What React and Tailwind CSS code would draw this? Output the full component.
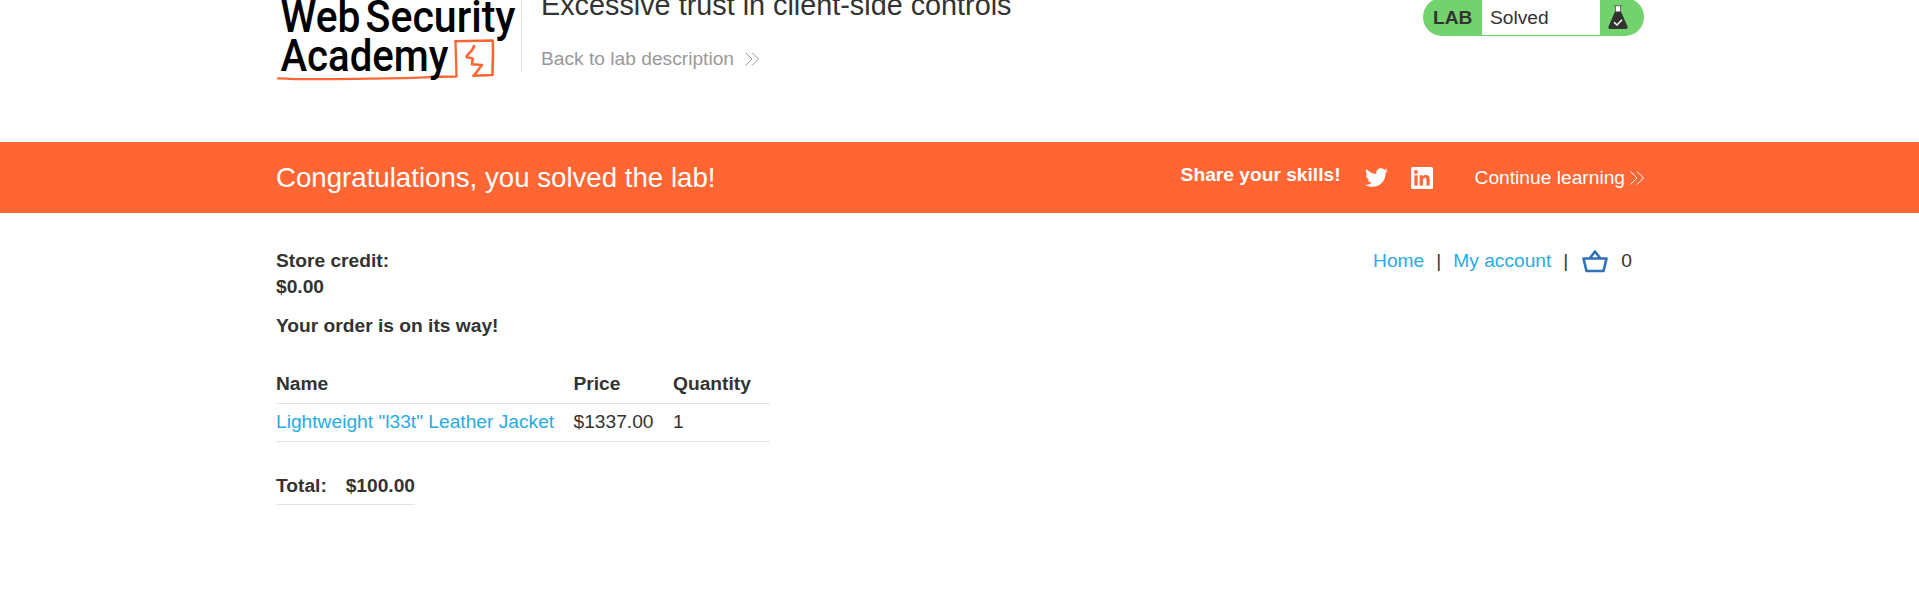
import { FaTwitter } from "react-icons/fa";

function Chevrons({ className }) {
  return (
    <svg className={className} width="14" height="16" viewBox="0 0 14 16" fill="none" stroke="currentColor" strokeWidth="1">
      <path d="M0.5 1.5 7 8 0.5 14.5M7 1.5 13.5 8 7 14.5" />
    </svg>
  );
}

function LinkedIn({ className }) {
  return (
    <svg className={className} width="22" height="22" viewBox="0 0 22 22">
      <rect width="22" height="22" rx="1.500" fill="#fff" />
      <g fill="#ff6633">
        <circle cx="5" cy="5" r="1.900" />
        <path d="M3.400 8.300H6.600V18.600H3.400Z" />
        <path d="M8.700 8.300H11.700V9.700C12.400 8.600 13.400 8 14.800 8C17.700 8 18.700 9.900 18.700 12.500V18.600H15.500V13.200C15.500 11.700 15.200 10.700 13.900 10.700C12.500 10.700 11.900 11.700 11.900 13.200V18.600H8.700Z" />
      </g>
    </svg>
  );
}

function Logo() {
  return (
    <svg className="block h-[142px] w-[246px] shrink-0" viewBox="0 0 246 142">
      <g fill="none" stroke="#ff6633" strokeLinejoin="round" strokeLinecap="round">
        <path strokeWidth="2.300" d="M2 78.300C30 80 70 79 110 78.400S150 76.700 180.500 76.500L179.500 41" />
        <path strokeWidth="2.600" d="M179.500 41.200 216.700 40.500C217.500 52 216.500 64 216.500 75L197.500 75.700" />
        <path strokeWidth="2.600" d="M198 46C197 51 191 54 190.500 57 192 58.500 196 57 196.700 59L196 64.300 206 65 198 75.500" />
      </g>
      <g fill="#000" fontFamily="Roboto, sans-serif" fontWeight="500" fontSize="45">
        <text x="4.500" y="32" textLength="80" lengthAdjust="spacingAndGlyphs">Web</text>
        <text x="89.500" y="32" textLength="150" lengthAdjust="spacingAndGlyphs">Security</text>
        <text x="4.500" y="71" textLength="168" lengthAdjust="spacingAndGlyphs">Academy</text>
      </g>
      <rect x="245" y="0" width="1" height="72" fill="#e0e0e0" />
    </svg>
  );
}

function LabStatus() {
  return (
    <div className="-mt-[2px] flex h-[38px] w-[221px] overflow-hidden rounded-[19px] bg-[#72d26e]">
      <span className="w-[59px] pl-[10px] pt-[7px] font-bold leading-[26px]">LAB</span>
      <span className="h-[37px] w-[118px] bg-white pl-[8px] pt-[6.5px] leading-[26px]">Solved</span>
      <svg className="ml-[8px] mt-[7px]" width="20" height="24" viewBox="0 0 20 24">
        <path d="M7 1H13V7H7Z" fill="#fff" />
        <path d="M5.500 0.700H14.500M7.500 1V7M12.500 1V7" stroke="#6b6b6a" strokeWidth="1" fill="none" />
        <path d="M7 6.500H13L19.500 21.500Q20 24 18 24H2Q0 24 0.500 21.500Z" fill="#333332" />
        <path d="M6 17.200 9 20 14 14.800" fill="none" stroke="#fff" strokeWidth="1.500" />
      </svg>
    </div>
  );
}

export default function App() {
  return (
    <div className="min-h-[610px] bg-white pl-px font-['Liberation_Sans',Arial,sans-serif] text-[19.2px] leading-[26px] text-[#333332]">
      <header className="mx-auto flex h-[142px] w-[1368px] overflow-hidden">
        <Logo />
        <div className="ml-[19px] flex-1">
          <h2 className="-mt-[11px] whitespace-nowrap text-[28.8px] leading-[32px]">Excessive trust in client-side controls</h2>
          <a className="mt-[25px] flex items-center text-[#999999]">
            Back to lab description
            <Chevrons className="ml-[11px]" />
          </a>
        </div>
        <LabStatus />
      </header>

      <section className="-ml-px h-[71px] bg-[#ff6633] pl-px text-white">
        <div className="mx-auto flex h-full w-[1368px] items-center">
          <h4 className="flex-1 text-[27.65px]">Congratulations, you solved the lab!</h4>
          <span className="-mt-[5px] font-bold">Share your skills!</span>
          <FaTwitter className="ml-[24px] size-[23px]" />
          <LinkedIn className="ml-[23px]" />
          <a className="ml-[42px] flex items-center">
            Continue learning
            <Chevrons className="ml-[5px]" />
          </a>
        </div>
      </section>

      <main className="mx-auto w-[1368px] pt-[35px]">
        <div className="flex justify-between">
          <p className="font-bold">Store credit:<br />$0.00</p>
          <nav className="flex h-[26px] items-center pr-[12px]">
            <a className="text-[#29abe2]">Home</a>
            <span className="ml-[12px]">|</span>
            <a className="ml-[12px] text-[#29abe2]">My account</a>
            <span className="ml-[12px]">|</span>
            <svg className="ml-[13px]" width="28" height="26" viewBox="0 0 28 26" fill="none" stroke="#2f72b8" strokeWidth="2.600" strokeLinejoin="round" strokeLinecap="round">
              <path d="M2.500 10.500H25.500L22.500 23H5.500ZM9 10 14 3.500 19 10" />
            </svg>
            <span className="ml-[12px]">0</span>
          </nav>
        </div>
        <p className="mt-[13px] font-bold">Your order is on its way!</p>
        <table className="mt-[27px] w-[494px] table-fixed border-separate border-spacing-0 text-left">
          <thead>
            <tr className="h-[38px]">
              <th className="w-[297.5px] border-b border-[#e3e3e3] p-0 pb-px">Name</th>
              <th className="w-[99.5px] border-b border-[#e3e3e3] p-0 pb-px">Price</th>
              <th className="border-b border-[#e3e3e3] p-0 pb-px">Quantity</th>
            </tr>
          </thead>
          <tbody>
            <tr className="h-[38px]">
              <td className="border-b border-[#e3e3e3] p-0 pb-px text-[#29abe2]">Lightweight "l33t" Leather Jacket</td>
              <td className="border-b border-[#e3e3e3] p-0 pb-px">$1337.00</td>
              <td className="border-b border-[#e3e3e3] p-0 pb-px">1</td>
            </tr>
          </tbody>
        </table>
        <div className="mt-[25px] flex h-[38px] w-[139px] items-center justify-between border-b border-[#e3e3e3] pt-px font-bold">
          <span>Total:</span>
          <span>$100.00</span>
        </div>
      </main>
    </div>
  );
}
